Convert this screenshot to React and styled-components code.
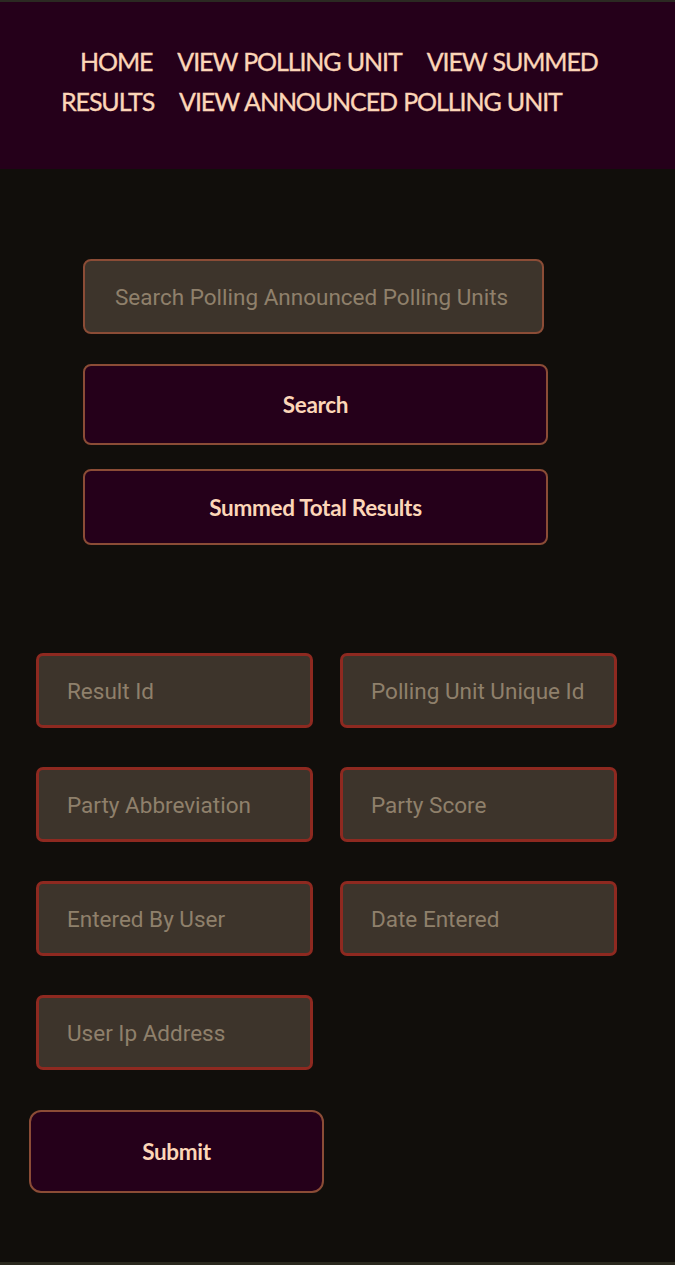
import styled, { createGlobalStyle } from 'styled-components';

const GlobalStyle = createGlobalStyle`
  html, body {
    margin: 0;
    padding: 0;
    background: #110e0b;
  }
  * {
    box-sizing: border-box;
  }
`;

const Page = styled.div`
  min-height: 1265px;
  border-top: 2px solid #2b2922;
  border-bottom: 3px solid #2a281e;
  display: flex;
  flex-direction: column;
`;

const Header = styled.header`
  background: #25001a;
  height: 167px;
  padding: 39px 40px 0 61px;
`;

const NavText = styled.nav`
  font-family: Lato, "Open Sans", sans-serif;
  font-size: 25px;
  line-height: 40px;
  color: #fcd6b8;
  text-indent: 19px;
  letter-spacing: -1.1px;
  word-spacing: 1px;
  -webkit-text-stroke: 0.35px #fcd6b8;
`;

const NavLink = styled.a`
  color: inherit;
  text-decoration: none;
  margin-right: 25px;
`;

const Main = styled.main`
  flex: 1;
  padding: 90px 0 0;
`;

const SearchBlock = styled.section`
  display: flex;
  flex-direction: column;
  align-items: flex-start;
  padding-left: 83px;
`;

const SearchInput = styled.input`
  width: 461px;
  height: 75px;
  background: #3d342b;
  border: 2px solid #8b4c36;
  border-radius: 8px;
  padding: 0 30px;
  font-family: Roboto, sans-serif;
  font-size: 22.5px;
  color: #e8d8c8;
  outline: none;
  &::placeholder {
    color: #8f806b;
  }
`;

const ActionButton = styled.button`
  width: ${({ $w }) => $w}px;
  height: ${({ $h }) => $h}px;
  margin-top: ${({ $mt }) => $mt}px;
  background: #25001a;
  border: 2px solid #8b4c36;
  border-radius: ${({ $r }) => $r || 8}px;
  font-family: Lato, "Open Sans", sans-serif;
  font-weight: 700;
  font-size: 22.5px;
  letter-spacing: -0.3px;
  color: #fcd6b8;
  cursor: pointer;
`;

const Form = styled.form`
  margin-top: 108px;
  padding-left: 29px;
`;

const FieldGrid = styled.div`
  display: grid;
  grid-template-columns: 277px 277px;
  column-gap: 27px;
  row-gap: 39px;
  padding-left: 7px;
`;

const Field = styled.input`
  width: 277px;
  height: 75px;
  background: #3d342b;
  border: 3px solid #8e2920;
  border-radius: 7px;
  padding: 0 28px;
  font-family: Roboto, sans-serif;
  font-size: 22.5px;
  color: #e8d8c8;
  outline: none;
  &::placeholder {
    color: #8f806b;
  }
`;

const fields = [
  'Result Id',
  'Polling Unit Unique Id',
  'Party Abbreviation',
  'Party Score',
  'Entered By User',
  'Date Entered',
  'User Ip Address',
];

export default function App() {
  return (
    <>
      <GlobalStyle />
      <Page>
        <Header>
          <NavText>
            <NavLink href="#">HOME</NavLink>
            <NavLink href="#">VIEW POLLING UNIT</NavLink>
            <NavLink href="#">VIEW SUMMED RESULTS</NavLink>
            <NavLink href="#">VIEW ANNOUNCED POLLING UNIT</NavLink>
          </NavText>
        </Header>
        <Main>
          <SearchBlock>
            <SearchInput placeholder="Search Polling Announced Polling Units" />
            <ActionButton $w={465} $h={81} $mt={30}>Search</ActionButton>
            <ActionButton $w={465} $h={76} $mt={24}>Summed Total Results</ActionButton>
          </SearchBlock>
          <Form onSubmit={ ( e ) => e.preventDefault() }>
            <FieldGrid>
              { fields.map( ( item ) => (
                <Field key={ item } placeholder={ item } />
              ) ) }
            </FieldGrid>
            <ActionButton type="submit" $w={295} $h={83} $mt={40} $r={12}>Submit</ActionButton>
          </Form>
        </Main>
      </Page>
    </>
  );
}
